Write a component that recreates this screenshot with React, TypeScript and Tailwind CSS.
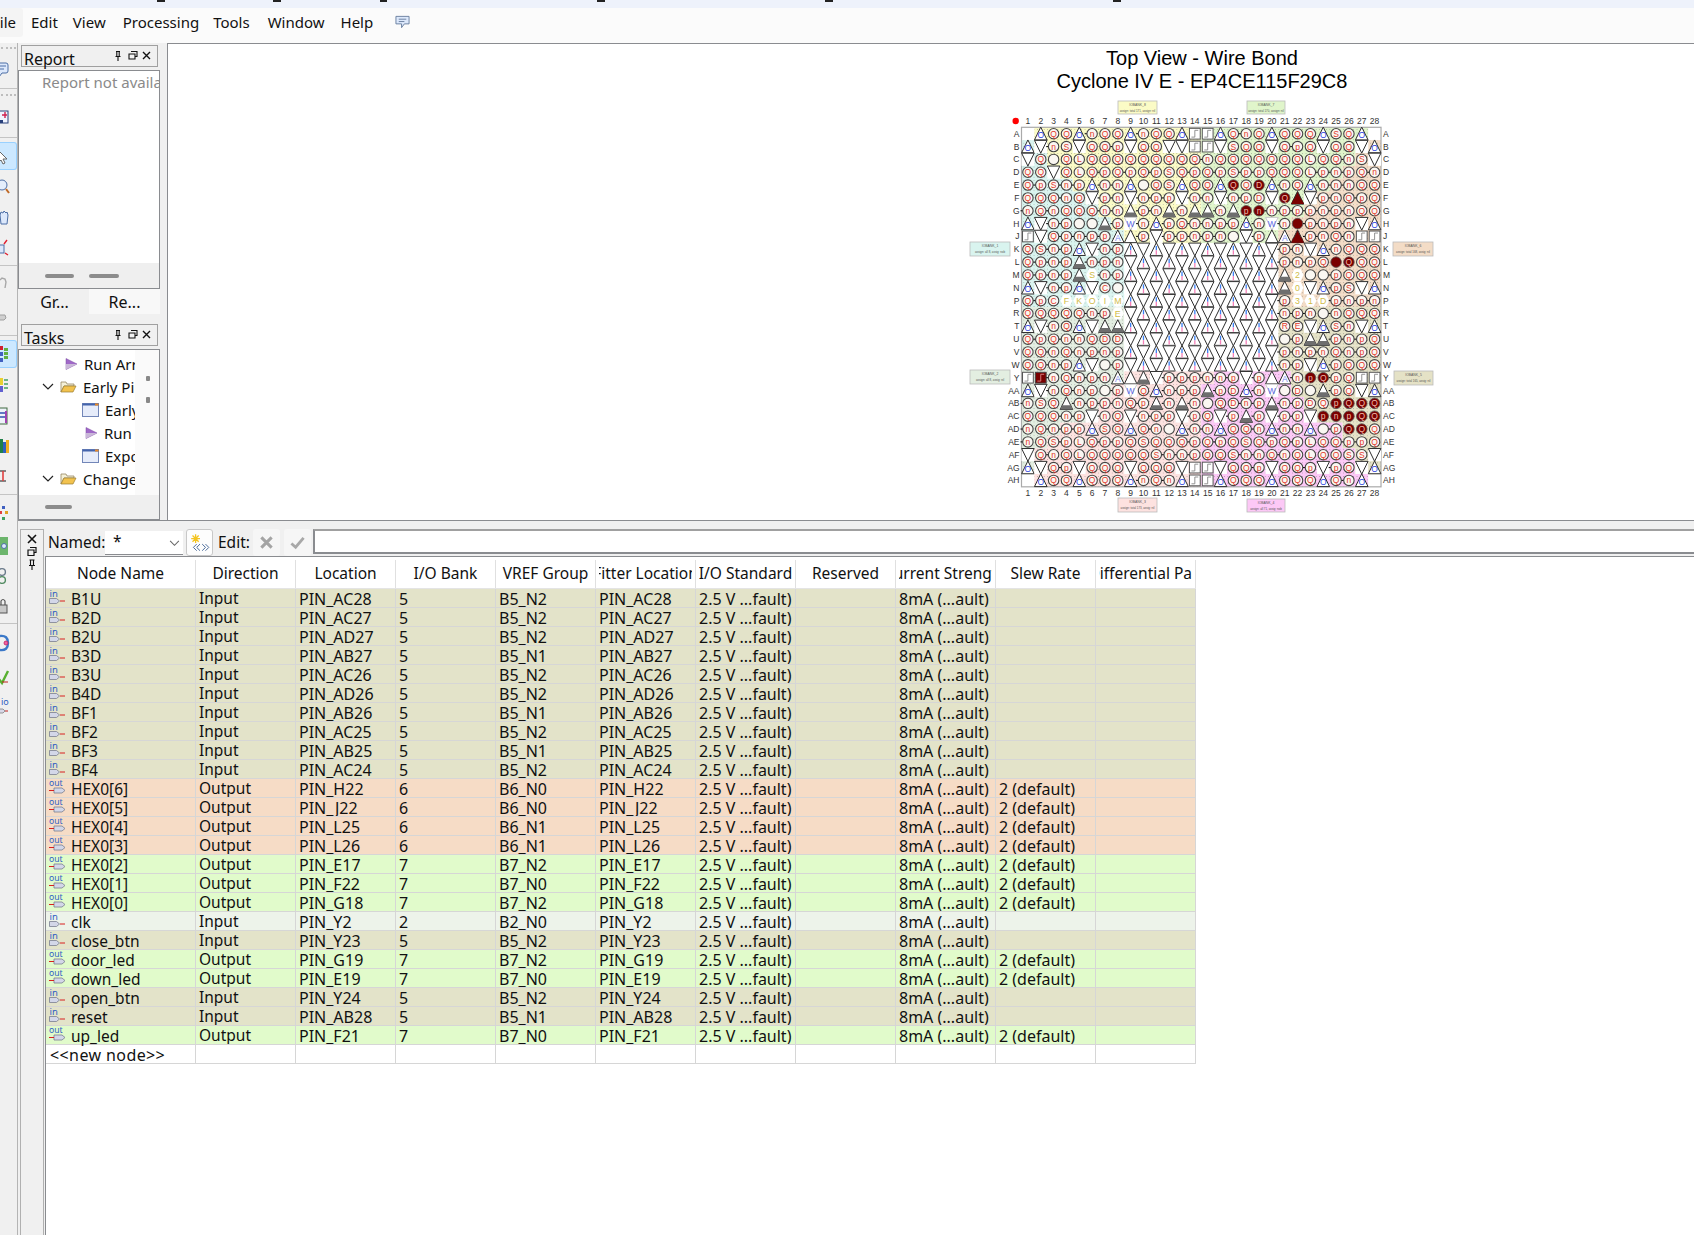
import React from "react";

const ROW_LABELS = ["A","B","C","D","E","F","G","H","J","K","L","M","N","P","R","T","U","V","W","Y","AA","AB","AC","AD","AE","AF","AG","AH"];

// one char per pin, see Pin below for what the chars stand for
const PIN_ROWS = [
  ".uQQunQQunQQu##uQnQuQQQuSQu.",
  "uvnSvQQpvQQvv##vSQQvQpQvQQvu",
  "vQoQLQQQQQQQQQnQQQQQQQLQQnSv",
  "QQvQLQpQpQpSQpQpSppQQQLpnpQn",
  "QpSnpunnuoQSuQQu1Q4unQunnnQQ",
  "QQQnQvpnvnppvnnvnpDv16vpnQpQ",
  "nQnQQQnngpngnggng23npppnpnQQ",
  "uvnpoogpWnupQnnppunWn5pnpnvu",
  "#vQpnppAtpvppnpnovptA6pnQn##",
  "QSnpuvnpixixixixixixpnvunQQQ",
  "QpnpgnpnxixixixixixipnpQ51QQ",
  "QpnpgsnpixixixixixixgzoopQQQ",
  "uvnpuvCoxixixixixixigyvupSvu",
  "QpCfkelmixixixixixixpbdhpnpn",
  "QQQQQnpjxixixixixixinpnonQQQ",
  "uvnQuvggixixixixixixREvuSnvu",
  "QpQnnQDDxixixixixixiopggpnpQ",
  "QQnQnpnpixixixixixixpnpnQnpQ",
  "QQnpuvopxixixixixixinpvupQQQ",
  "#7nQnpnAtgvpppnnpvptAn21pQ##",
  "uvnQnpopWQunppgpDunWoDogpQvu",
  "nSQgnppnQpgngnoQDnpgnpDQ2111",
  "QQQnpvnQvnppvpQvpgpvppv23211",
  "nQnppuSQuQnounnuQQnunnuop11Q",
  "nQSpLQppQSQQQpQpQSQpQpLQQppQ",
  "vQnQLQQQQQSnnpQQSnnQnQLQQSSv",
  "uvQpvQQQvQQQv##vQQpvQQpvpQvu",
  ".uQQuQQQunQnu##uQQQuQQQuQnu.",
];

const YELLOW: Record<string, string> = { s: "S", f: "F", k: "K", e: "O", l: "I", m: "M", j: "E", z: "2", y: "0", b: "3", d: "1", h: "D" };
const DARK: Record<string, string> = { "1": "Q", "2": "p", "3": "n", "4": "D" };

const Y = "#fbfbc6", G = "#e0f5cb", C = "#d9f4ef", P = "#f3dcc6", S = "#e3eee1", K = "#e5e2c6", R = "#fde2e0", M = "#fcc8f6";
type Run = [number, number, string];
const mid: Run[] = [[1, 8, C], [21, 28, P]];
const low: Run[] = [[1, 8, S], [21, 28, K]];
const BANK_RUNS: Run[][] = [
  [[2, 14, Y], [15, 27, G]],
  [[1, 1, C], [2, 14, Y], [15, 27, G], [28, 28, P]],
  [[1, 2, C], [3, 14, Y], [15, 26, G], [27, 28, P]],
  [[1, 3, C], [4, 14, Y], [15, 25, G], [26, 28, P]],
  [[1, 4, C], [5, 14, Y], [15, 24, G], [25, 28, P]],
  [[1, 5, C], [6, 14, Y], [15, 23, G], [24, 28, P]],
  [[1, 6, C], [7, 14, Y], [15, 22, G], [23, 28, P]],
  [[1, 7, C], [8, 14, Y], [15, 21, G], [22, 28, P]],
  [[1, 8, C], [9, 14, Y], [15, 20, G], [21, 28, P]],
  mid, mid, mid, mid, mid,
  low, low, low, low, low,
  [[1, 8, S], [9, 15, R], [16, 21, M], [22, 28, K]],
  [[1, 7, S], [8, 14, R], [15, 21, M], [22, 28, K]],
  [[1, 6, S], [7, 14, R], [15, 22, M], [23, 28, K]],
  [[1, 5, S], [6, 14, R], [15, 23, M], [24, 28, K]],
  [[1, 3, S], [4, 14, R], [15, 25, M], [26, 28, K]],
  [[1, 2, S], [3, 14, R], [15, 25, M], [26, 28, K]],
  [[1, 1, S], [2, 14, R], [15, 26, M], [27, 28, K]],
  [[1, 1, S], [2, 14, R], [15, 26, M], [27, 28, K]],
  [[2, 14, R], [15, 27, M]],
];

const X0 = 1021.5;
const Y0 = 127.3;
const PITCH = 12.84;

function triUp(x: number, y: number) {
  return `${x},${y - 6.6} ${x + 6.3},${y + 6.2} ${x - 6.3},${y + 6.2}`;
}
function triDown(x: number, y: number) {
  return `${x - 6.3},${y - 6.2} ${x + 6.3},${y - 6.2} ${x},${y + 6.6}`;
}

function Pin({ c, x, y }: { c: string; x: number; y: number }) {
  if (c === ".") return null;
  const stroke = "#2e2e2e";
  if (c === "u" || c === "t" || c === "A") {
    return (
      <g>
        <polygon points={triUp(x, y)} fill="#fff" stroke={stroke} strokeWidth={1} />
        {c === "u" && <text x={x} y={y + 4.5} fontSize={8.5} textAnchor="middle" fill="#2b3fe0">O</text>}
        {c === "A" && <text x={x} y={y + 4.5} fontSize={8.5} textAnchor="middle" fill="#7a86ee">A</text>}
      </g>
    );
  }
  if (c === "v" || c === "W" || c === "x") {
    return (
      <g>
        <rect x={x - 6.4} y={y - 6.4} width={12.8} height={12.8} fill="#fff" />
        <polygon points={triDown(x, y)} fill="#fff" stroke={c === "W" ? "#c8c8c8" : stroke} strokeWidth={1} />
        {c === "W" && <text x={x} y={y + 3} fontSize={8.5} textAnchor="middle" fill="#5a68e8">W</text>}
      </g>
    );
  }
  if (c === "i") {
    return (
      <g>
        <polygon points={triUp(x, y)} fill="#fff" stroke={stroke} strokeWidth={1} />
        <line x1={x} y1={y - 3.4} x2={x} y2={y + 1} stroke="#3a80f4" strokeWidth={1.3} />
        <line x1={x} y1={y + 1} x2={x} y2={y + 5.4} stroke="#f480b8" strokeWidth={1.3} />
      </g>
    );
  }
  if (c === "g" || c === "6") {
    const dark = c === "6";
    return (
      <g>
        <polygon points={triUp(x, y)} fill={dark ? "#7a0000" : "#fff"} stroke={stroke} strokeWidth={1} />
        <polygon points={`${x - 4.2},${y + 1.8} ${x + 4.2},${y + 1.8} ${x + 6.3},${y + 6.2} ${x - 6.3},${y + 6.2}`} fill={dark ? "#7a0000" : "#6e6e6e"} />
      </g>
    );
  }
  if (c === "#" || c === "7") {
    const dark = c === "7";
    return (
      <g>
        <rect x={x - 5.4} y={y - 5.4} width={10.8} height={10.8} fill={dark ? "#7a0000" : "#fff"} stroke={dark ? "#444" : "#555"} strokeWidth={1} />
        <path d={`M${x - 3.4} ${y + 3.4}H${x}V${y - 3.4}H${x + 3.4}`} fill="none" stroke={dark ? "#d88" : "#888"} strokeWidth={0.9} />
      </g>
    );
  }
  if (YELLOW[c]) {
    return (
      <g>
        <polygon points={`${x - 3},${y - 6} ${x + 3},${y - 6} ${x + 6},${y} ${x + 3},${y + 6} ${x - 3},${y + 6} ${x - 6},${y}`} fill="#fff" />
        <text x={x} y={y + 3.2} fontSize={8.8} textAnchor="middle" fill="#d0bc48">{YELLOW[c]}</text>
      </g>
    );
  }
  if (DARK[c] || c === "5") {
    return (
      <g>
        <circle cx={x} cy={y} r={5.3} fill="#7a0000" stroke="#555" strokeWidth={0.8} />
        {DARK[c] && <text x={x} y={y + 3} fontSize={8.5} textAnchor="middle" fill="#f2b8a8">{DARK[c]}</text>}
      </g>
    );
  }
  return (
    <g>
      {(c === "n" || c === "p") && <line x1={x - 7.4} y1={y} x2={x - 5} y2={y} stroke="#111" strokeWidth={1.1} />}
      <circle cx={x} cy={y} r={5.2} fill="#faf7f2" stroke="#444" strokeWidth={1.1} />
      {c !== "o" && <text x={x} y={y + 3} fontSize={8.5} textAnchor="middle" fill="#e2372a">{c}</text>}
    </g>
  );
}

const BANK_BOXES = [
  { x: 1118, y: 101, w: 39, h: 13, f: Y, a: "IOBANK_8", b: "assign: total 171, assign: nil" },
  { x: 1247, y: 101, w: 38, h: 13, f: G, a: "IOBANK_7", b: "assign: total 170, assign: nil" },
  { x: 970, y: 242, w: 40, h: 14, f: C, a: "IOBANK_1", b: "assign: all 8, assig: nob" },
  { x: 1393, y: 242, w: 40, h: 14, f: P, a: "IOBANK_6", b: "assign: total 168, assig: nil" },
  { x: 970, y: 370, w: 40, h: 14, f: S, a: "IOBANK_2", b: "assign: all 8, assig: nil" },
  { x: 1394, y: 371, w: 39, h: 14, f: K, a: "IOBANK_5", b: "assign: total 165, assig: nil" },
  { x: 1118, y: 498, w: 39, h: 14, f: R, a: "IOBANK_3", b: "assign: total 173, assig: nil" },
  { x: 1247, y: 499, w: 38, h: 13, f: M, a: "IOBANK_4", b: "assign: all 71, assig: nob" },
];

function PinChart() {
  const cols = Array.from({ length: 28 }, (_, i) => i);
  return (
    <svg viewBox="965 96 480 422" className="ml-[6px] w-[480px] h-[422px] shrink-0">
      <defs>
        <pattern id="stipple" width="3.4" height="3.4" patternUnits="userSpaceOnUse">
          <rect width="0.8" height="0.8" fill="#666" opacity="0.55" />
        </pattern>
      </defs>
      {BANK_RUNS.map((runs, r) =>
        runs.map(([a, b, f], i) => (
          <g key={`${r}-${i}`}>
            <rect x={X0 + (a - 1) * PITCH} y={Y0 + r * PITCH} width={(b - a + 1) * PITCH} height={PITCH + 0.2} fill={f} />
            <rect x={X0 + (a - 1) * PITCH} y={Y0 + r * PITCH} width={(b - a + 1) * PITCH} height={PITCH + 0.2} fill="url(#stipple)" />
          </g>
        ))
      )}
      <rect x={X0} y={Y0} width={28 * PITCH} height={28 * PITCH} fill="none" stroke="#aaa" strokeWidth={1.2} />
      {PIN_ROWS.map((row, r) =>
        row.split("").map((c, i) => (
          <Pin key={`${r}-${i}`} c={c} x={X0 + (i + 0.5) * PITCH} y={Y0 + (r + 0.5) * PITCH} />
        ))
      )}
      <circle cx={1015.7} cy={121} r={3.2} fill="#f00" />
      {cols.map((i) => (
        <g key={i} fontSize={8.5} fill="#333" textAnchor="middle">
          <text x={X0 + (i + 0.5) * PITCH} y={124}>{i + 1}</text>
          <text x={X0 + (i + 0.5) * PITCH} y={496}>{i + 1}</text>
        </g>
      ))}
      {ROW_LABELS.map((l, r) => (
        <g key={l} fontSize={8.5} fill="#333">
          <text x={1019.5} y={Y0 + (r + 0.5) * PITCH + 3} textAnchor="end">{l}</text>
          <text x={1383} y={Y0 + (r + 0.5) * PITCH + 3}>{l}</text>
        </g>
      ))}
      {BANK_BOXES.map((b) => (
        <g key={b.a}>
          <rect x={b.x} y={b.y} width={b.w} height={b.h} fill={b.f} stroke="#bbb" strokeWidth={0.8} />
          <text x={b.x + b.w / 2} y={b.y + 5} fontSize={3.4} fill="#555" textAnchor="middle">{b.a}</text>
          <text x={b.x + b.w / 2} y={b.y + 10.5} fontSize={2.9} fill="#555" textAnchor="middle">{b.b}</text>
        </g>
      ))}
    </svg>
  );
}

function DockButtons() {
  return (
    <svg viewBox="0 0 42 12" className="w-[42px] h-[12px] shrink-0" fill="none" stroke="#111" strokeWidth="1.1">
      <path d="M3 1.5h4M3.8 1.5v5M6.2 1.5v5M2.5 6.5h5M5 6.5v4.5" />
      <path d="M18 1.5h6v5h-2M16 4h6v5h-6z" />
      <path d="M30 2l7 7M37 2l-7 7" strokeWidth="1.4" />
    </svg>
  );
}

function TitleBar({ title }: { title: string }) {
  return (
    <div className="ml-[3px] w-[137px] h-[22px] border border-[#a0a0a0] flex items-center justify-between pr-[2px] pl-[2px]">
      <span className="text-[#111] text-[16px] leading-[20px] mt-[5px]">{title}</span>
      <DockButtons />
    </div>
  );
}

function Grip({ w }: { w: string }) {
  return <div className={`${w} h-[4px] rounded-full bg-[#8c8c8c]`} />;
}

function RunIcon() {
  return (
    <svg viewBox="0 0 14 14" className="w-[14px] h-[14px] shrink-0">
      <polygon points="2,1.5 13,7 2,12.5" fill="#a068c8" stroke="#7a4aa0" strokeWidth="0.5" />
      <polygon points="2,7 13,7 2,12.5" fill="#c9b7d8" />
    </svg>
  );
}

function FolderIcon() {
  return (
    <svg viewBox="0 0 17 13" className="w-[17px] h-[13px] shrink-0">
      <path d="M1 2h5l1 2h7v2H4L1 12z" fill="#f4f0d8" stroke="#8a7a50" strokeWidth="0.7" />
      <path d="M4 6h12l-3 6H1z" fill="#f2c24e" stroke="#9a7c30" strokeWidth="0.7" />
    </svg>
  );
}

function WindowIcon() {
  return (
    <svg viewBox="0 0 17 14" className="w-[17px] h-[14px] shrink-0">
      <rect x="0.5" y="0.5" width="16" height="13" fill="#e6ecfa" stroke="#7286b8" />
      <rect x="0.5" y="0.5" width="16" height="2" fill="#4464ac" />
      <rect x="13" y="0.5" width="3.5" height="2" fill="#e88a28" />
    </svg>
  );
}

function Chevron() {
  return (
    <svg viewBox="0 0 12 8" className="w-[12px] h-[8px] shrink-0" fill="none" stroke="#222" strokeWidth="1.2">
      <path d="M1 1l5 5 5-5" />
    </svg>
  );
}

function TreeRow({ indent, children, label }: { indent: string; children: React.ReactNode; label: string }) {
  return (
    <div className={`h-[23px] flex items-center gap-[6px] ${indent}`}>
      {children}
      <span className="text-[15px] text-[#111] whitespace-nowrap">{label}</span>
    </div>
  );
}

function LeftDock() {
  return (
    <div className="w-[142px] shrink-0 flex flex-col pt-[2px]">
      <TitleBar title="Report" />
      <div className="mt-[3px] h-[220px] border border-[#8a8c90] bg-white flex flex-col">
        <div className="flex-1 overflow-hidden pl-[23px] text-[15px] leading-[23px] text-[#8a8a8a] whitespace-nowrap">Report not available</div>
        <div className="h-[25px] bg-[#efefef] flex items-center gap-[15px] pl-[26px]">
          <Grip w="w-[29px]" />
          <Grip w="w-[30px]" />
        </div>
      </div>
      <div className="h-[25px] flex ml-[2px] text-[16px] text-[#111]">
        <div className="w-[69px] flex items-center justify-center">Gr...</div>
        <div className="w-[71px] flex items-center justify-center bg-[#f8f8f8]">Re...</div>
      </div>
      <div className="mt-[10px]">
        <TitleBar title="Tasks" />
      </div>
      <div className="mt-[3px] h-[171px] border border-[#8a8c90] flex flex-col bg-[#fafafa]">
        <div className="flex flex-1 min-h-0">
          <div className="w-[116px] bg-white overflow-hidden pt-[2px]">
            <TreeRow indent="pl-[45px]" label="Run Arrow"><RunIcon /></TreeRow>
            <TreeRow indent="pl-[23px]" label="Early Pin"><Chevron /><FolderIcon /></TreeRow>
            <TreeRow indent="pl-[63px]" label="Early Pin"><WindowIcon /></TreeRow>
            <TreeRow indent="pl-[65px]" label="Run I/O"><RunIcon /></TreeRow>
            <TreeRow indent="pl-[63px]" label="Export"><WindowIcon /></TreeRow>
            <TreeRow indent="pl-[23px]" label="Change Pin"><Chevron /><FolderIcon /></TreeRow>
          </div>
          <div className="flex-1 relative">
            <div className="absolute left-[11px] top-[26px] w-[4px] h-[5px] rounded-[1px] bg-[#888]" />
            <div className="absolute left-[11px] top-[47px] w-[4px] h-[6px] rounded-[1px] bg-[#888]" />
          </div>
        </div>
        <div className="h-[24px] bg-[#efefef] flex items-center pl-[26px]">
          <Grip w="w-[27px]" />
        </div>
      </div>
    </div>
  );
}

function ToolGrip() {
  return <div className="h-[3px] mx-[1px] border-t-2 border-dotted border-[#bdbdbd]" />;
}

function Tool({ h, active, children }: { h: string; active?: boolean; children: React.ReactNode }) {
  return (
    <div className={`${h} flex items-center ${active ? "bg-[#cce8ff] border border-l-0 border-[#99d1ff] rounded-r-[3px]" : ""}`}>
      <svg viewBox="0 0 16 20" className="w-[16px] h-[20px] shrink-0">{children}</svg>
    </div>
  );
}

function LeftToolbar() {
  return (
    <div className="w-[18px] shrink-0 border-r border-[#b4b4b4] overflow-hidden flex flex-col">
      <div className="h-[4px]" />
      <ToolGrip />
      <Tool h="h-[38px]">
        <path d="M-6 4h12q2 0 2 2v6q0 2-2 2H2l-3 4v-4h-5z" fill="#dce8fb" stroke="#4d6fa6" />
        <path d="M-2 7h8M-2 10h6" stroke="#4d6fa6" />
      </Tool>
      <div className="h-px bg-[#c4c4c4] shrink-0" />
      <div className="h-[5px]" />
      <ToolGrip />
      <Tool h="h-[40px]">
        <rect x="-3" y="4" width="11" height="12" fill="#f0f4ff" stroke="#28407a" />
        <path d="M2 8h5M5 5v6" stroke="#d02050" strokeWidth="1.4" />
        <rect x="-3" y="13" width="6" height="3" fill="#28407a" />
      </Tool>
      <div className="h-px bg-[#c4c4c4] shrink-0" />
      <div className="h-[4px]" />
      <Tool h="h-[28px]" active>
        <path d="M-1 5l8 8H3l2 4-2 1-2-4-2 2z" fill="#fff" stroke="#666" />
      </Tool>
      <Tool h="h-[33px]">
        <circle cx="2" cy="8" r="5" fill="#e4eefc" stroke="#4d6fa6" />
        <path d="M6 12l3 4" stroke="#c06a28" strokeWidth="2" />
      </Tool>
      <Tool h="h-[29px]">
        <path d="M0 7l1-3 2 1 1-2 2 2 1-1 1 3-1 9H1z" fill="#dce8fb" stroke="#4d6fa6" />
      </Tool>
      <Tool h="h-[30px]">
        <rect x="-3" y="8" width="7" height="8" fill="#dce8fb" stroke="#4d6fa6" />
        <path d="M4 7l3-4M5 16l3 2" stroke="#e02030" strokeWidth="1.4" />
      </Tool>
      <div className="h-[3px]" />
      <div className="h-px bg-[#c4c4c4] shrink-0" />
      <Tool h="h-[36px]">
        <path d="M0 6l2-2 3 1 1 3-1 6" fill="none" stroke="#a8a8a8" strokeWidth="1.4" />
      </Tool>
      <Tool h="h-[26px]">
        <path d="M-2 10h7l1 3-2 2h-6z" fill="#d0d0d0" stroke="#a0a0a0" />
      </Tool>
      <div className="h-[7px]" />
      <div className="h-px bg-[#c4c4c4] shrink-0" />
      <div className="h-[4px]" />
      <Tool h="h-[28px]" active>
        <rect x="-1" y="2" width="4" height="4" fill="#d02030" />
        <rect x="-1" y="8" width="4" height="4" fill="#4060c0" />
        <rect x="-1" y="14" width="4" height="4" fill="#4060c0" />
        <rect x="4" y="4" width="4" height="3" fill="#60b040" />
        <rect x="4" y="8" width="4" height="3" fill="#60b040" />
        <rect x="4" y="12" width="4" height="3" fill="#60b040" />
      </Tool>
      <Tool h="h-[33px]">
        <rect x="-1" y="3" width="4" height="7" fill="#e8d030" />
        <rect x="-1" y="11" width="4" height="6" fill="#6060d0" />
        <path d="M4 5h4M4 9h4M4 13h4" stroke="#40a060" strokeWidth="1.6" />
      </Tool>
      <Tool h="h-[30px]">
        <rect x="-2" y="2" width="9" height="16" fill="#eef2fa" stroke="#406a40" />
        <path d="M-1 7h6M-1 11h6" stroke="#3050b0" strokeWidth="1.3" />
        <rect x="5" y="5" width="2" height="12" fill="#a040b0" />
      </Tool>
      <Tool h="h-[30px]">
        <rect x="-1" y="3" width="4" height="14" fill="#20804a" />
        <rect x="3" y="6" width="3" height="11" fill="#3060c0" />
        <rect x="6" y="4" width="3" height="13" fill="#f0b020" />
      </Tool>
      <Tool h="h-[30px]">
        <path d="M-1 5h7M-1 15h7" stroke="#606060" strokeWidth="1.6" />
        <path d="M3 5v10" stroke="#e04040" strokeWidth="1.6" />
      </Tool>
      <div className="h-[3px]" />
      <div className="h-px bg-[#c4c4c4] shrink-0" />
      <Tool h="h-[36px]">
        <rect x="2" y="3" width="3" height="3" fill="#4060c0" />
        <rect x="-1" y="8" width="3" height="3" fill="#e04040" />
        <rect x="5" y="8" width="3" height="3" fill="#e0a020" />
        <rect x="2" y="14" width="3" height="3" fill="#40a060" />
      </Tool>
      <Tool h="h-[30px]">
        <rect x="-2" y="1" width="10" height="18" fill="#6cb56c" />
        <circle cx="4" cy="10" r="2.5" fill="#dce8fb" stroke="#4d6fa6" />
      </Tool>
      <Tool h="h-[30px]">
        <circle cx="2" cy="6" r="3.4" fill="none" stroke="#6a7a8a" strokeWidth="1.4" />
        <circle cx="2" cy="14" r="3.4" fill="none" stroke="#508a60" strokeWidth="1.4" />
      </Tool>
      <Tool h="h-[30px]">
        <rect x="-1" y="9" width="8" height="8" fill="#c8c8c8" stroke="#555" />
        <path d="M1 9V5q2-3 4 0v4" fill="none" stroke="#555" strokeWidth="1.2" />
      </Tool>
      <div className="h-[2px]" />
      <div className="h-px bg-[#c4c4c4] shrink-0" />
      <Tool h="h-[38px]">
        <path d="M0 3q8-1 8 7t-8 7" fill="none" stroke="#3b78c8" strokeWidth="2.4" />
        <circle cx="6" cy="10" r="2" fill="#f060a0" stroke="#c02060" strokeWidth="0.8" />
      </Tool>
      <Tool h="h-[29px]">
        <path d="M-2 11l4 5 6-12" fill="none" stroke="#58b030" strokeWidth="2.4" />
        <path d="M2 15h6" stroke="#c02020" />
      </Tool>
      <Tool h="h-[29px]">
        <path d="M-2 13h5l2 2-2 2h-5z" fill="#d8d8e8" stroke="#808080" strokeWidth="0.8" />
        <path d="M5 15h3" stroke="#c02020" />
        <text x="1" y="9" fontSize="9" fill="#3060c0">io</text>
      </Tool>
    </div>
  );
}

function PinGlyph({ dir }: { dir: "in" | "out" }) {
  return (
    <svg viewBox="0 0 18 18" className="w-[18px] h-[18px] shrink-0">
      {dir === "in" ? (
        <g>
          <text x="0.5" y="7.5" fontSize="9.5" fill="#2f5fc4">in</text>
          <path d="M0.5 9.5h7l3 2.5-3 2.5h-7z" fill="#d3d7e8" stroke="#7a7f90" strokeWidth="0.8" />
          <path d="M11 12h5" stroke="#d82020" strokeWidth="1" />
        </g>
      ) : (
        <g>
          <text x="0" y="7" fontSize="8.6" fill="#2f5fc4">out</text>
          <path d="M5 9h8l3 2.5-3 2.5H5z" fill="#d3d7e8" stroke="#7a7f90" strokeWidth="0.8" />
          <path d="M0 11.5h5" stroke="#d82020" strokeWidth="1" />
        </g>
      )}
    </svg>
  );
}

type PinRow = { name: string; loc: string; bank: number; vref: string };

const TABLE: PinRow[] = [
  { name: "B1U", loc: "PIN_AC28", bank: 5, vref: "B5_N2" },
  { name: "B2D", loc: "PIN_AC27", bank: 5, vref: "B5_N2" },
  { name: "B2U", loc: "PIN_AD27", bank: 5, vref: "B5_N2" },
  { name: "B3D", loc: "PIN_AB27", bank: 5, vref: "B5_N1" },
  { name: "B3U", loc: "PIN_AC26", bank: 5, vref: "B5_N2" },
  { name: "B4D", loc: "PIN_AD26", bank: 5, vref: "B5_N2" },
  { name: "BF1", loc: "PIN_AB26", bank: 5, vref: "B5_N1" },
  { name: "BF2", loc: "PIN_AC25", bank: 5, vref: "B5_N2" },
  { name: "BF3", loc: "PIN_AB25", bank: 5, vref: "B5_N1" },
  { name: "BF4", loc: "PIN_AC24", bank: 5, vref: "B5_N2" },
  { name: "HEX0[6]", loc: "PIN_H22", bank: 6, vref: "B6_N0" },
  { name: "HEX0[5]", loc: "PIN_J22", bank: 6, vref: "B6_N0" },
  { name: "HEX0[4]", loc: "PIN_L25", bank: 6, vref: "B6_N1" },
  { name: "HEX0[3]", loc: "PIN_L26", bank: 6, vref: "B6_N1" },
  { name: "HEX0[2]", loc: "PIN_E17", bank: 7, vref: "B7_N2" },
  { name: "HEX0[1]", loc: "PIN_F22", bank: 7, vref: "B7_N0" },
  { name: "HEX0[0]", loc: "PIN_G18", bank: 7, vref: "B7_N2" },
  { name: "clk", loc: "PIN_Y2", bank: 2, vref: "B2_N0" },
  { name: "close_btn", loc: "PIN_Y23", bank: 5, vref: "B5_N2" },
  { name: "door_led", loc: "PIN_G19", bank: 7, vref: "B7_N2" },
  { name: "down_led", loc: "PIN_E19", bank: 7, vref: "B7_N0" },
  { name: "open_btn", loc: "PIN_Y24", bank: 5, vref: "B5_N2" },
  { name: "reset", loc: "PIN_AB28", bank: 5, vref: "B5_N1" },
  { name: "up_led", loc: "PIN_F21", bank: 7, vref: "B7_N0" },
];

const OUTPUTS = ["HEX0", "door_led", "down_led", "up_led"];
const BANK_BG: Record<number, string> = { 2: "bg-[#edf3ea]", 5: "bg-[#e3e3c9]", 6: "bg-[#f6dcc6]", 7: "bg-[#e1fbcb]" };
const HEADERS = ["Direction", "Location", "I/O Bank", "VREF Group", "Fitter Location", "I/O Standard", "Reserved", "Current Strength", "Slew Rate", "Differential Pair"];

function Cell({ children, narrow }: { children?: React.ReactNode; narrow?: boolean }) {
  return (
    <div className={`w-[100px] shrink-0 h-full border-r border-[#d6d6d6] pl-[3px] overflow-hidden whitespace-nowrap ${narrow ? "text-[15.5px] leading-[19px]" : ""}`}>{children}</div>
  );
}

function PinTable() {
  return (
    <div className="flex-1 min-h-0 bg-white border-l border-t border-[#8a8c90] overflow-hidden">
      <div className="w-[1150px]">
        <div className="flex h-[32px] pt-[3px] border-b border-[#e4e4e4] text-[15.5px]">
          <div className="w-[150px] shrink-0 border-r border-[#e0e0e0] flex items-center justify-center">Node Name</div>
          {HEADERS.map((h) => (
            <div key={h} className="w-[100px] shrink-0 border-r border-[#e0e0e0] flex items-center px-[3px]">
              <div className="w-full overflow-hidden flex justify-center whitespace-nowrap">
                <span className="shrink-0">{h}</span>
              </div>
            </div>
          ))}
        </div>
        {TABLE.map((row) => {
          const isOut = OUTPUTS.some((o) => row.name.startsWith(o));
          return (
            <div key={row.name} className={`flex h-[19px] leading-[20px] border-b border-[#d6d6d6] ${BANK_BG[row.bank]}`}>
              <div className="w-[150px] shrink-0 h-full border-r border-[#d6d6d6] flex items-center pl-[3px] gap-[4px]">
                <PinGlyph dir={isOut ? "out" : "in"} />
                <span className="text-[15.5px] mt-[2px]">{row.name}</span>
              </div>
              <Cell narrow>{isOut ? "Output" : "Input"}</Cell>
              <Cell>{row.loc}</Cell>
              <Cell>{row.bank}</Cell>
              <Cell>{row.vref}</Cell>
              <Cell>{row.loc}</Cell>
              <Cell>2.5 V ...fault)</Cell>
              <Cell />
              <Cell>8mA (...ault)</Cell>
              <Cell>{isOut ? "2 (default)" : ""}</Cell>
              <Cell />
            </div>
          );
        })}
        <div className="flex h-[19px] leading-[20px] border-b border-[#d6d6d6]">
          <div className="w-[150px] shrink-0 h-full border-r border-[#d6d6d6] pl-[4px] tracking-[0.4px]">&lt;&lt;new node&gt;&gt;</div>
          {HEADERS.map((h) => <Cell key={h} />)}
        </div>
      </div>
    </div>
  );
}

function FilterBar() {
  return (
    <div className="h-[27px] shrink-0 flex items-center pl-[3px] text-[15.5px]">
      <span className="w-[57px] text-[#111]">Named:</span>
      <div className="w-[78px] h-[24px] bg-white border-b border-[#8a8c90] flex items-start justify-between pl-[8px] pr-[3px]">
        <span className="text-[#111] leading-[20px]">*</span>
        <svg viewBox="0 0 12 8" className="w-[11px] h-[7px] mt-[9px]" fill="none" stroke="#666" strokeWidth="1.2"><path d="M1 1l5 5 5-5" /></svg>
      </div>
      <div className="ml-[3px] w-[27px] h-[27px] rounded-[3px] border border-[#c8c8c8] bg-[#fdfdfd] flex items-center justify-center">
        <svg viewBox="0 0 20 20" className="w-[22px] h-[22px]">
          <path d="M6 2v8M2 6h8M3.2 3.2l5.6 5.6M8.8 3.2l-5.6 5.6" stroke="#f4c420" strokeWidth="1.2" />
          <path d="M7 11l-3 3 3 3M10 11l-3 3 3 3M12 11l3 3-3 3M15 11l3 3-3 3" fill="none" stroke="#4a6a9a" strokeWidth="0.9" />
        </svg>
      </div>
      <span className="ml-[5px] w-[35px] text-[#111]">Edit:</span>
      <div className="w-[27px] h-[27px] rounded-[3px] bg-[#f6f6f6] flex items-center justify-center">
        <svg viewBox="0 0 16 16" className="w-[15px] h-[15px]" fill="none" stroke="#a4a4a4" strokeWidth="3.2"><path d="M2.5 2.5l11 11M13.5 2.5l-11 11" /></svg>
      </div>
      <div className="ml-[4px] w-[27px] h-[27px] rounded-[3px] bg-[#f6f6f6] flex items-center justify-center">
        <svg viewBox="0 0 16 16" className="w-[15px] h-[15px]" fill="none" stroke="#a8a8a8" strokeWidth="3"><path d="M1.5 9l4.5 4L14.5 3" /></svg>
      </div>
      <div className="ml-[2px] flex-1 h-[25px] -mt-[2px] bg-white border-2 border-r-0 border-[#8a8c90] border-t-[#a0a0a0]" />
    </div>
  );
}

function SideDockButtons() {
  return (
    <div className="flex flex-col items-center gap-[1px] pt-[3px]">
      <svg viewBox="0 0 12 12" className="w-[12px] h-[12px]" fill="none" stroke="#111" strokeWidth="1.6"><path d="M2 2l8 8M10 2l-8 8" /></svg>
      <svg viewBox="0 0 12 12" className="w-[12px] h-[12px]" fill="none" stroke="#111" strokeWidth="1.2"><path d="M4 1.5h6v5H8M2 4h6v5.5H2z" /></svg>
      <svg viewBox="0 0 12 12" className="w-[12px] h-[12px]" fill="none" stroke="#111" strokeWidth="1.1"><path d="M3.5 1h5M4.5 1v5M7.5 1v5M3 6.5h6M6 6.5V11" /></svg>
    </div>
  );
}

const MENU = [
  { label: "Edit", cls: "ml-[8px]" },
  { label: "View", cls: "ml-[15px]" },
  { label: "Processing", cls: "ml-[17px]" },
  { label: "Tools", cls: "ml-[14px]" },
  { label: "Window", cls: "ml-[18px]" },
  { label: "Help", cls: "ml-[16px]" },
];

export default function App() {
  return (
    <div className="w-[1694px] h-[1235px] overflow-hidden bg-[#f0f0f0] flex flex-col font-['Noto_Sans',sans-serif] text-[16px] text-[#111]">
      <div className="h-[8px] shrink-0 bg-[#eef2fb] flex items-start">
        <div className="ml-[157px] w-[8px] h-[2px] bg-[#222]" />
        <div className="ml-[108px] w-[8px] h-[2px] bg-[#222]" />
        <div className="ml-[99px] w-[7px] h-[2px] bg-[#222]" />
        <div className="ml-[210px] w-[8px] h-[2px] bg-[#222]" />
        <div className="ml-[220px] w-[8px] h-[2px] bg-[#222]" />
        <div className="ml-[280px] w-[8px] h-[2px] bg-[#222]" />
      </div>
      <div className="h-[35px] shrink-0 bg-[#fbfbfb] flex items-start text-[15px]">
        <div className="w-[23px] h-[29px] bg-[#f4f4f4] rounded-r-[3px] overflow-hidden flex justify-end items-center pr-[7px]">
          <span>ile</span>
        </div>
        <div className="flex h-[29px] items-center">
          {MENU.map((m) => (
            <span key={m.label} className={m.cls}>{m.label}</span>
          ))}
        </div>
        <svg viewBox="0 0 16 14" className="ml-[22px] mt-[7px] w-[15px] h-[14px]">
          <path d="M1 1h14v8h-5l-3 4V9H1z" fill="#dce8fb" stroke="#6a7f9f" />
          <path d="M4 4h8M4 6.5h6" stroke="#6a7f9f" />
        </svg>
      </div>
      <div className="flex-1 min-h-0 flex">
        <LeftToolbar />
        <div className="flex-1 min-w-0 flex flex-col">
          <div className="h-[478px] shrink-0 flex border-b border-[#8a8c90]">
            <LeftDock />
            <div className="ml-[7px] flex-1 min-w-0 overflow-hidden bg-white border-l border-t border-[#8a8c90]">
              <div className="w-[2068px] flex flex-col items-center font-['Liberation_Sans',sans-serif]">
                <div className="pt-[3px] h-[52px] shrink-0 text-center text-[20px] leading-[23px] text-black">
                  <div>Top View - Wire Bond</div>
                  <div>Cyclone IV E - EP4CE115F29C8</div>
                </div>
                <PinChart />
              </div>
            </div>
          </div>
          <div className="flex-1 min-h-0 flex pt-[8px]">
            <div className="ml-[2px] w-[24px] shrink-0 border border-[#b0b0b0] border-b-0">
              <SideDockButtons />
            </div>
            <div className="ml-[1px] flex-1 min-w-0 flex flex-col">
              <FilterBar />
              <PinTable />
            </div>
          </div>
        </div>
      </div>
    </div>
  );
}
